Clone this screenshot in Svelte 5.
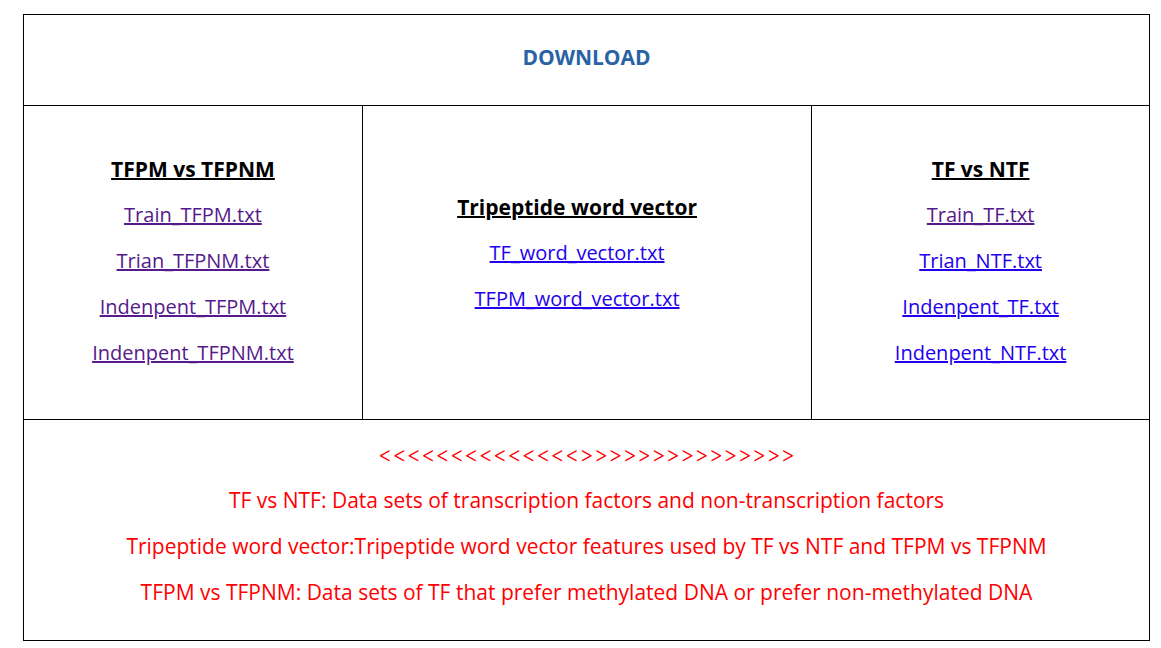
<script>
  const methylation = ['Train_TFPM.txt', 'Trian_TFPNM.txt', 'Indenpent_TFPM.txt', 'Indenpent_TFPNM.txt'];
  const vectors = ['TF_word_vector.txt', 'TFPM_word_vector.txt'];
  const factors = ['Train_TF.txt', 'Trian_NTF.txt', 'Indenpent_TF.txt', 'Indenpent_NTF.txt'];
  const notes = [
    'TF vs NTF: Data sets of transcription factors and non-transcription factors',
    'Tripeptide word vector:Tripeptide word vector features used by TF vs NTF and TFPM vs TFPNM',
    'TFPM vs TFPNM: Data sets of TF that prefer methylated DNA or prefer non-methylated DNA'
  ];
</script>

{#snippet files(title, names, visited)}
  <h2>{title}</h2>
  {#each names as name, i}
    <p class="file"><a href="#{name}" class:visited={i < visited}>{name}</a></p>
  {/each}
{/snippet}

<main>
  <table>
    <colgroup><col class="first" /><col /><col class="last" /></colgroup>
    <tbody>
      <tr class="title"><th colspan="3"><h1>DOWNLOAD</h1></th></tr>
      <tr class="lists">
        <td>{@render files('TFPM vs TFPNM', methylation, 4)}</td>
        <td class="middle">{@render files('Tripeptide word vector', vectors, 0)}</td>
        <td>{@render files('TF vs NTF', factors, 1)}</td>
      </tr>
      <tr class="notes">
        <td colspan="3">
          <p class="arrows">{'<'.repeat(14)}{'>'.repeat(15)}</p>
          {#each notes as note}<p>{note}</p>{/each}
        </td>
      </tr>
    </tbody>
  </table>
</main>

<style>
  :global(body) { background: #fff; }
  main {
    padding: 14px 11px 7px 23px;
    font-family: "Open Sans", "Noto Sans", sans-serif;
    font-size: 21px;
    line-height: 46px;
    color: #000;
  }
  table { width: 100%; border-collapse: collapse; table-layout: fixed; text-align: center; }
  .first { width: 30.1%; }
  .last { width: 30%; }
  td, th { border: 1px solid #000; padding: 0; vertical-align: middle; }
  h1, h2, p { margin: 0; font-size: inherit; }
  h1 { color: #2a63a5; padding: 19px 0 25px; }
  h1, h2 { font-weight: 700; }
  h2, a { text-decoration: underline; text-decoration-thickness: 2px; text-underline-offset: 1px; }
  .lists td { padding: 40px 0 43px; }
  .lists .middle { padding: 40px 20px 59px 0; }
  .lists .file { font-size: 20px; }
  .notes td { padding: 11px 0 25px; color: #f00; }
  .notes .arrows { font-family: Inter, sans-serif; font-size: 22px; font-weight: 300; }
  a { color: #20e; }
  a.visited { color: #551a8b; }
</style>
